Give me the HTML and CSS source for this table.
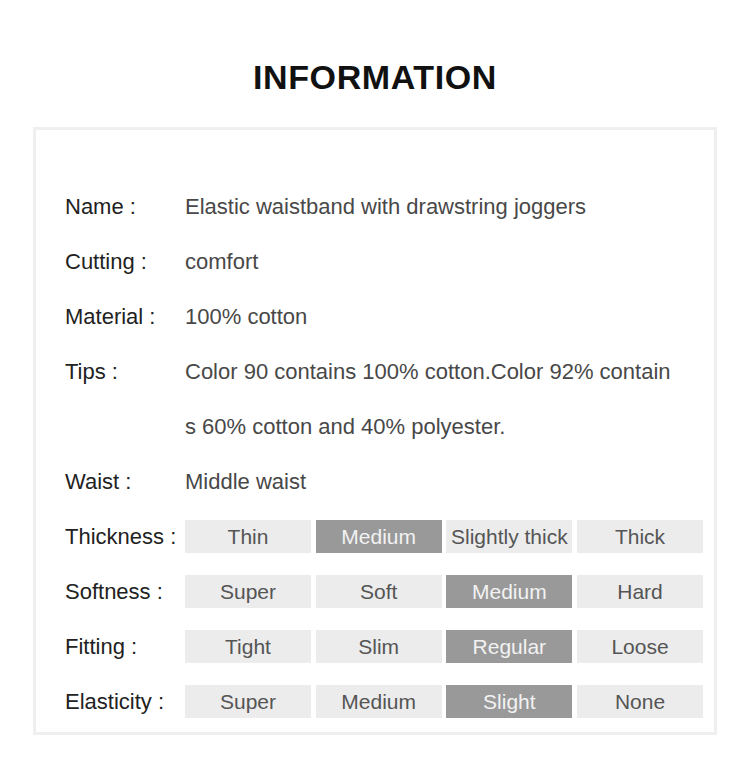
FILE: index.html
```html
<!DOCTYPE html>
<html>
<head>
<meta charset="utf-8">
<link rel="stylesheet" href="styles.css">
</head>
<body>
<div class="page">
  <h1 class="title">INFORMATION</h1>
  <div class="panel">
    <div class="row"><div class="label">Name :</div><div class="value">Elastic waistband with drawstring joggers</div></div>
    <div class="row"><div class="label">Cutting :</div><div class="value">comfort</div></div>
    <div class="row"><div class="label">Material :</div><div class="value">100% cotton</div></div>
    <div class="row"><div class="label">Tips :</div><div class="value">Color 90 contains 100% cotton.Color 92% contain<br>s 60% cotton and 40% polyester.</div></div>
    <div class="row"><div class="label">Waist :</div><div class="value">Middle waist</div></div>
    <div class="row opts"><div class="label">Thickness :</div>
      <div class="cells"><span class="cell">Thin</span><span class="cell on">Medium</span><span class="cell">Slightly thick</span><span class="cell">Thick</span></div></div>
    <div class="row opts"><div class="label">Softness :</div>
      <div class="cells"><span class="cell">Super</span><span class="cell">Soft</span><span class="cell on">Medium</span><span class="cell">Hard</span></div></div>
    <div class="row opts"><div class="label">Fitting :</div>
      <div class="cells"><span class="cell">Tight</span><span class="cell">Slim</span><span class="cell on">Regular</span><span class="cell">Loose</span></div></div>
    <div class="row opts"><div class="label">Elasticity :</div>
      <div class="cells"><span class="cell">Super</span><span class="cell">Medium</span><span class="cell on">Slight</span><span class="cell">None</span></div></div>
  </div>
</div>
</body>
</html>
```
FILE: styles.css
```css
html, body { margin: 0; padding: 0; background: #fff; }
body { font-family: "Liberation Sans", Arial, sans-serif; }
.page { width: 750px; height: 766px; overflow: hidden; }
.title {
  margin: 0;
  padding-top: 57px;
  height: 40px;
  line-height: 40px;
  text-align: center;
  font-size: 34px;
  font-weight: bold;
  letter-spacing: 0.6px;
  color: #111;
}
.panel {
  margin: 30px 0 0 33px;
  border: 3px solid #efefef;
  padding: 49px 11px 3px 29px;
  width: 638px;
}
.row {
  display: grid;
  grid-template-columns: 120px 1fr;
  font-size: 22px;
  line-height: 55px;
}
.label { color: #222; white-space: nowrap; }
.value { color: #484848; white-space: nowrap; }
.opts { height: 55px; align-items: center; }
.cells {
  display: grid;
  grid-template-columns: repeat(4, 1fr);
  column-gap: 4.67px;
}
.cell {
  height: 33px;
  line-height: 33px;
  background: #ececec;
  color: #555;
  text-align: center;
  font-size: 21px;
  white-space: nowrap;
}
.cell.on { background: #999; color: #f2f2f2; }
```
